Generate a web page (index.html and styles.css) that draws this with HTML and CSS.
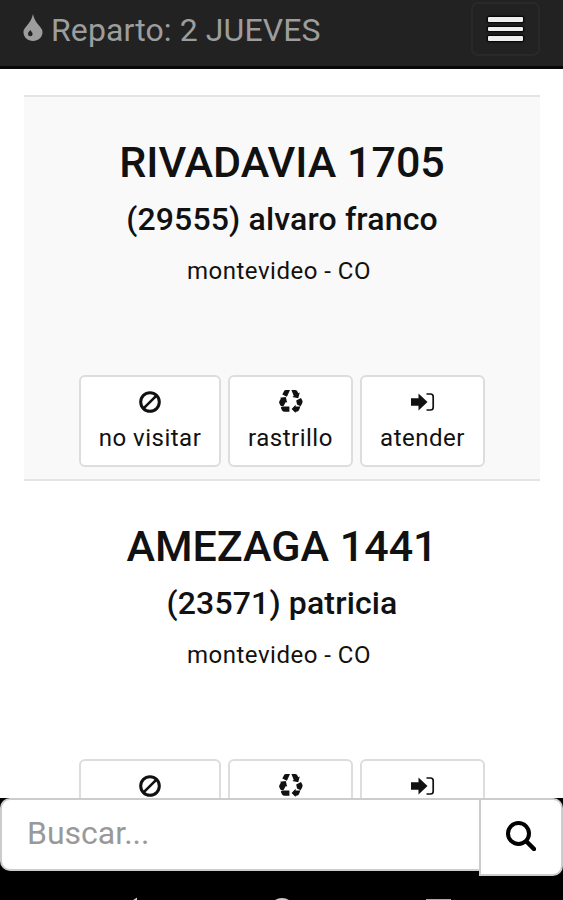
FILE: index.html
```
<!DOCTYPE html>
<html lang="es">
<head>
	<title>Reparto: 2 JUEVES</title>
	<meta charset="utf-8">
	<meta name="viewport" content="width=device-width, initial-scale=1">

	<link rel="stylesheet" href="styles.css">
</head>
<body>

	<!-- Shared icons -->
	<svg class="sprite">
		<symbol id="icon-ban" viewBox="0 0 24 24">
			<circle cx="12" cy="12" r="9.3" fill="none" stroke="currentColor" stroke-width="3"/>
			<path d="M5.8 18.2L18.2 5.8" stroke="currentColor" stroke-width="2.6"/>
		</symbol>
		<symbol id="icon-recycle" viewBox="0 0 24 24">
			<path d="M6.8 0H11L7.9 6.8L3.3 4.4L5 1.2Q5.6 0 6.8 0ZM12.4 0H16Q17.6 0 18.4 1.4L19.4 3.2L20.8 2.4L19.2 8.2L13.4 6.9L14.8 5.9ZM17.2 10.6L22 8L23.2 10.2Q24 11.8 23.1 13.4L21.6 16.2L18 14.6ZM12.6 19L16.6 14.8V16.6H21.4L20.2 19.8Q19.4 21.8 17.4 21.8H16.6V23ZM2.8 16.6H10.4V21.8H5.6Q3.9 21.8 3.1 20.4L1.8 17.8ZM1 7.8L6.8 7L8.2 12.8L6.8 12L4.6 16H1.8L.4 13.4Q-.2 12.2 .5 11L1.9 8.6Z" fill="currentColor"/>
		</symbol>
		<symbol id="icon-enter" viewBox="0 0 24 24">
			<path d="M0 8.3H7.5V3.5L16.5 12L7.5 20.5V15.7H0Z" fill="currentColor"/>
			<path d="M15.5 4H19.5Q22.2 4 22.2 6.7V17.3Q22.2 20 19.5 20H15.5" fill="none" stroke="currentColor" stroke-width="1.7"/>
		</symbol>
	</svg>

	<header class="navbar">
		<a class="brand">
			<svg class="icon-drop" viewBox="0 0 20 27">
				<path fill-rule="evenodd" d="M10 0C11.2 5 12.6 7.2 15.6 11C18.5 14.6 19.5 15.7 19.5 18.3C19.5 23.2 15.3 27 10 27S.5 23.2.5 18.3C.5 15.7 1.5 14.6 4.4 11C7.4 7.2 8.8 5 10 0ZM7.3 16C5.8 17.8 5 18.8 5 20A2.3 2.3 0 0 0 9.6 20C9.6 18.8 8.6 17.8 7.3 16Z" fill="currentColor"/>
			</svg>
			<span>Reparto: 2 JUEVES</span>
		</a>
		<button class="navbar-toggle" aria-label="Menu">
			<span></span>
			<span></span>
			<span></span>
		</button>
	</header>

	<main class="visits">
		<section class="visit">
			<h1>RIVADAVIA 1705</h1>
			<h2>(29555) alvaro franco</h2>
			<p>montevideo - CO</p>
			<div class="actions">
				<button class="btn btn-skip"><svg><use href="#icon-ban"/></svg><span>no visitar</span></button>
				<button class="btn"><svg><use href="#icon-recycle"/></svg><span>rastrillo</span></button>
				<button class="btn"><svg><use href="#icon-enter"/></svg><span>atender</span></button>
			</div>
		</section>
		<section class="visit">
			<h1>AMEZAGA 1441</h1>
			<h2>(23571) patricia</h2>
			<p>montevideo - CO</p>
			<div class="actions">
				<button class="btn btn-skip"><svg><use href="#icon-ban"/></svg></button>
				<button class="btn"><svg><use href="#icon-recycle"/></svg></button>
				<button class="btn"><svg><use href="#icon-enter"/></svg></button>
			</div>
		</section>
	</main>

	<footer class="bottom">
		<form class="search">
			<input type="text" placeholder="Buscar...">
			<button type="button" aria-label="Buscar">
				<svg viewBox="0 0 30 30">
					<circle cx="12.5" cy="12.5" r="10.5" fill="none" stroke="currentColor" stroke-width="4"/>
					<path d="M20.5 20.5L28 28" stroke="currentColor" stroke-width="4.5" stroke-linecap="round"/>
				</svg>
			</button>
		</form>
		<svg class="system-nav" viewBox="0 0 563 25">
			<path d="M137 22.5L118 35L137 48Z" fill="#cccccc"/>
			<circle cx="282" cy="36" r="12" fill="none" stroke="#cccccc" stroke-width="2"/>
			<rect x="427" y="25" width="23" height="23" fill="none" stroke="#aaaaaa" stroke-width="2"/>
		</svg>
	</footer>

</body>
</html>
```
FILE: styles.css
```
*,
*:before,
*:after {
	box-sizing: border-box;
}

body {
	background-color: #ffffff;
	color: #111111;
	display: flex;
	flex-direction: column;
	font-family: Roboto, "Liberation Sans", sans-serif;
	height: 100vh;
	margin: 0;
	overflow: hidden;
}

button,
input {
	font-family: inherit;
}

.sprite {
	display: none;
}

/* Navbar */
.navbar {
	align-items: flex-start;
	background-color: #222222;
	border-bottom: 3px solid #080808;
	display: flex;
	flex: none;
	height: 69px;
	justify-content: space-between;
	padding: 1px 23px 0;
}

.brand {
	color: #9d9d9d;
	display: flex;
	font-size: 32px;
	gap: 8px;
	letter-spacing: 0.1px;
	line-height: 36px;
	padding-top: 11px;
}

.icon-drop {
	height: 27px;
	margin-top: 2px;
	width: 20px;
}

.navbar-toggle {
	align-items: center;
	background-color: transparent;
	border: 2px solid #292929;
	border-radius: 7px;
	display: flex;
	flex-direction: column;
	gap: 5px;
	height: 54px;
	justify-content: center;
	margin-top: 1px;
	padding: 0;
	width: 69px;
}

.navbar-toggle span {
	background-color: #eeeeee;
	border-radius: 1px;
	box-shadow: 0 0 2px 1px #000000;
	height: 4.5px;
	width: 35px;
}

/* Visits */
.visits {
	flex: 1;
	min-height: 0;
	overflow: hidden;
	padding: 26px 23px 0 24px;
}

.visit {
	border-top: 2px solid #e4e4e4;
	height: 384px;
	padding-top: 40px;
	text-align: center;
}

.visit:first-child {
	background-color: #f9f9f9;
}

.visit h1,
.visit h2,
.visit p {
	font-weight: 500;
	margin: 0;
}

.visit h1 {
	font-size: 43px;
	line-height: 50px;
}

.visit h2 {
	font-size: 32px;
	letter-spacing: 0.15px;
	line-height: 36px;
	margin-top: 14px;
}

.visit p {
	font-size: 24px;
	font-weight: 400;
	letter-spacing: 0.5px;
	line-height: 28px;
	margin-top: 20px;
	padding-right: 6px;
}

.actions {
	display: flex;
	gap: 7px;
	justify-content: center;
	margin-top: 90px;
}

.btn {
	align-items: center;
	background-color: #ffffff;
	border: 2px solid #dddddd;
	border-radius: 6px;
	color: #111111;
	display: flex;
	flex-direction: column;
	font-size: 24px;
	height: 92px;
	letter-spacing: 0.5px;
	line-height: 28px;
	padding: 13px 0 0;
	width: 125px;
}

.btn-skip {
	width: 142px;
}

.btn svg {
	height: 24px;
	margin-bottom: 10px;
	width: 24px;
}

/* Search */
.bottom {
	background-color: #000000;
	flex: none;
	height: 102px;
}

.search {
	align-items: flex-start;
	display: flex;
	height: 77px;
}

.search input {
	border: 2px solid #cccccc;
	border-radius: 10px 0 0 10px;
	border-right: 0;
	font-size: 32px;
	height: 73px;
	min-width: 0;
	padding: 0 25px 4px;
	width: 479px;
}

.search input::placeholder {
	color: #999999;
}

.search button {
	background-color: #ffffff;
	border: 2px solid #cccccc;
	border-radius: 0 10px 10px 0;
	color: #000000;
	height: 78px;
	padding: 0 1px 2px 0;
	width: 84px;
}

.search svg {
	height: 30px;
	vertical-align: middle;
	width: 30px;
}

.system-nav {
	display: block;
	height: 25px;
	width: 100%;
}
```
